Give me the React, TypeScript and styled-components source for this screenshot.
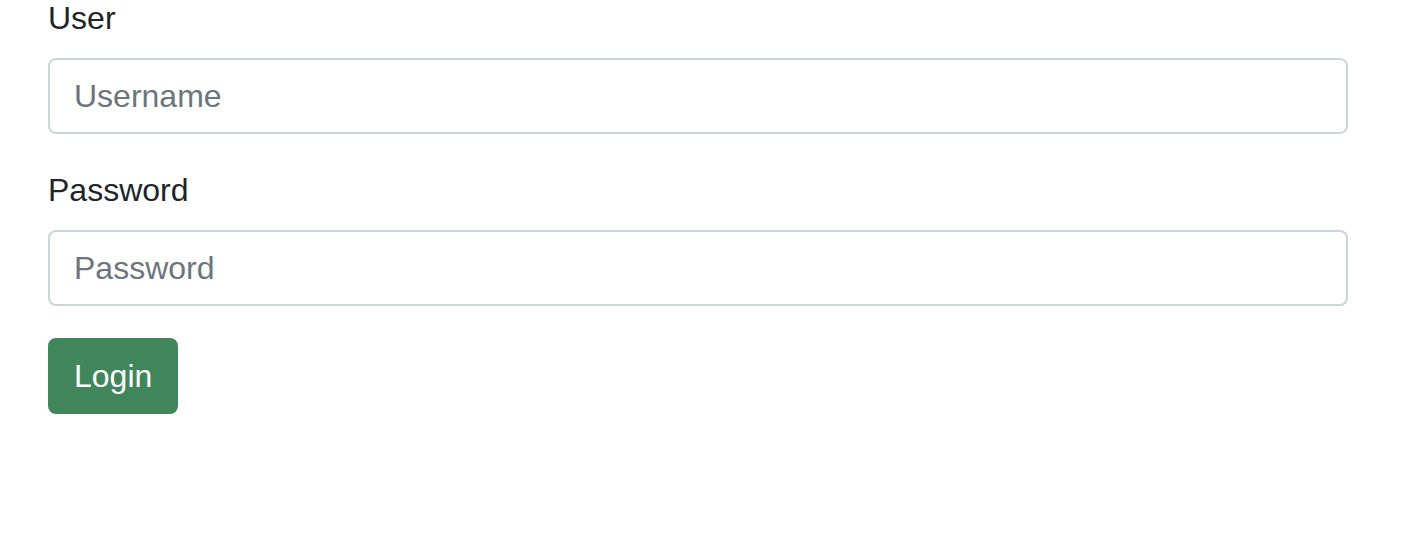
import React from "react";
import styled, { createGlobalStyle } from "styled-components";

const GlobalStyle = createGlobalStyle`
    html, body {
        margin: 0;
        padding: 0;
        background: #ffffff;
        overflow: hidden;
    }
    body {
        font-family: "Liberation Sans", Arial, sans-serif;
        color: #212529;
    }
`;

const Page = styled.div`
    padding: 0 58px 0 48px;
    margin-top: -6px;
`;

const FormGroup = styled.div`
    margin-bottom: 32px;
`;

const Label = styled.label`
    display: block;
    font-size: 32px;
    line-height: 48px;
    margin-bottom: 16px;
    color: #212529;
`;

const Input = styled.input`
    display: block;
    box-sizing: border-box;
    width: 100%;
    height: 76px;
    padding: 12px 24px;
    font-family: "Liberation Sans", Arial, sans-serif;
    font-size: 32px;
    line-height: 48px;
    color: #495057;
    background: #ffffff;
    border: 2px solid #ced4da;
    border-radius: 8px;
    outline: none;

    &::placeholder {
        color: #6c757d;
        opacity: 1;
    }
`;

const Button = styled.button`
    display: inline-block;
    box-sizing: border-box;
    height: 76px;
    padding: 12px 24px;
    font-family: "Liberation Sans", Arial, sans-serif;
    font-size: 32px;
    line-height: 48px;
    color: #ffffff;
    background-color: #40865a;
    border: 2px solid #40865a;
    border-radius: 8px;
    cursor: pointer;
`;

const App = () => {
    return (
        <>
            <GlobalStyle />
            <Page>
                <form onSubmit={(e) => e.preventDefault()}>
                    <FormGroup>
                        <Label htmlFor="user">User</Label>
                        <Input id="user" type="text" placeholder="Username" />
                    </FormGroup>
                    <FormGroup>
                        <Label htmlFor="password">Password</Label>
                        <Input id="password" type="password" placeholder="Password" />
                    </FormGroup>
                    <Button type="submit">Login</Button>
                </form>
            </Page>
        </>
    );
};

export default App;
